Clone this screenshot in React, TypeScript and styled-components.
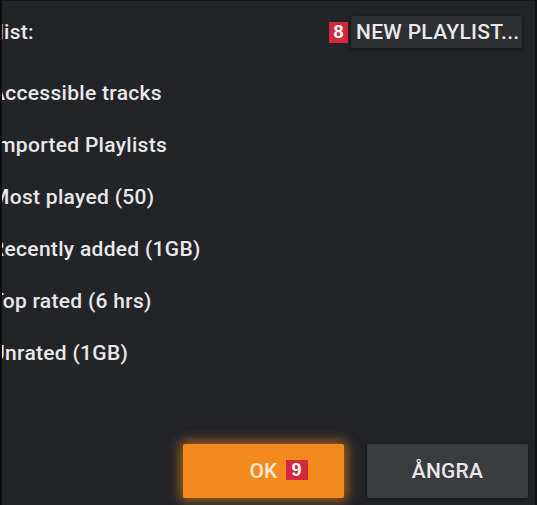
import React from "react";
import styled, { createGlobalStyle } from "styled-components";

const GlobalStyle = createGlobalStyle`
	html, body {
		margin: 0;
		padding: 0;
		background: #232428;
		overflow: hidden;
	}
	* {
		box-sizing: border-box;
	}
`;

const Frame = styled.div`
	width: 537px;
	height: 505px;
	position: relative;
	overflow: hidden;
	background: #232428;
	border-left: 2px solid #0c0d10;
	border-right: 2px solid #111215;
	border-top: 1px solid #15161a;
	font-family: Roboto, "Liberation Sans", sans-serif;
	color: #e8e8ea;
	display: flex;
	flex-direction: column;
`;

const Header = styled.div`
	display: flex;
	align-items: center;
	justify-content: space-between;
	height: 48px;
	padding-top: 14px;
	padding-right: 13px;
	margin-left: -45px;
`;

const Label = styled.span`
	font-size: 21px;
	font-weight: 500;
	letter-spacing: 0.3px;
`;

const Badge = styled.span`
	display: inline-flex;
	align-items: center;
	justify-content: center;
	width: 19px;
	height: 21px;
	background: #d22a3c;
	color: #fff;
	font-family: "Liberation Sans", Arial, sans-serif;
	font-weight: 700;
	font-size: 18px;
`;

const HeaderAction = styled.div`
	display: flex;
	align-items: center;
	gap: 3px;
`;

const GhostButton = styled.button`
	height: 32px;
	width: 171px;
	padding: 0 0 0 5px;
	border: none;
	border-radius: 2px;
	background: #2d2f33;
	box-shadow: 0 1px 4px rgba(0, 0, 0, 0.55);
	color: #e8e8ea;
	font-family: Roboto, "Liberation Sans", sans-serif;
	font-size: 21px;
	font-weight: 500;
	letter-spacing: 0.3px;
	text-align: left;
	white-space: nowrap;
	overflow: hidden;
`;

const List = styled.ul`
	list-style: none;
	margin: 18px 0 0 -11px;
	padding: 0;
	display: flex;
	flex-direction: column;
`;

const Item = styled.li`
	height: 52px;
	display: flex;
	align-items: center;
	font-size: 21px;
	font-weight: 500;
	letter-spacing: 0.3px;
`;

const Footer = styled.div`
	margin-top: auto;
	display: flex;
	justify-content: flex-end;
	gap: 23px;
	padding: 0 7px 7px 0;
`;

const DialogButton = styled.button<{ $primary?: boolean }>`
	position: relative;
	width: 161px;
	height: 54px;
	border: none;
	border-radius: 2px;
	background: ${(p) => (p.$primary ? "#f28a1f" : "#393b3f")};
	box-shadow: ${(p) =>
		p.$primary
			? "0 0 12px 3px rgba(242, 138, 31, 0.6)"
			: "0 1px 4px rgba(0, 0, 0, 0.5)"};
	color: ${(p) => (p.$primary ? "#fbe6d2" : "#e8e8ea")};
	font-family: Roboto, "Liberation Sans", sans-serif;
	font-size: 21px;
	font-weight: 500;
	letter-spacing: 0.2px;
	text-transform: uppercase;
`;

const ButtonText = styled.span`
	position: relative;
`;

const ButtonBadge = styled(Badge)`
	position: absolute;
	left: calc(100% + 8px);
	top: 1px;
	height: 20px;
	width: 22px;
`;

const items = [
	"Accessible tracks",
	"Imported Playlists",
	"Most played (50)",
	"Recently added (1GB)",
	"Top rated (6 hrs)",
	"Unrated (1GB)",
];

export default function App() {
	return (
		<>
			<GlobalStyle />
			<Frame>
				<Header>
					<Label>Playlist:</Label>
					<HeaderAction>
						<Badge>8</Badge>
						<GhostButton>NEW PLAYLIST...</GhostButton>
					</HeaderAction>
				</Header>
				<List>
					{items.map((name) => (
						<Item key={name}>{name}</Item>
					))}
				</List>
				<Footer>
					<DialogButton $primary>
						<ButtonText>
							OK
							<ButtonBadge>9</ButtonBadge>
						</ButtonText>
					</DialogButton>
					<DialogButton>ÅNGRA</DialogButton>
				</Footer>
			</Frame>
		</>
	);
}
